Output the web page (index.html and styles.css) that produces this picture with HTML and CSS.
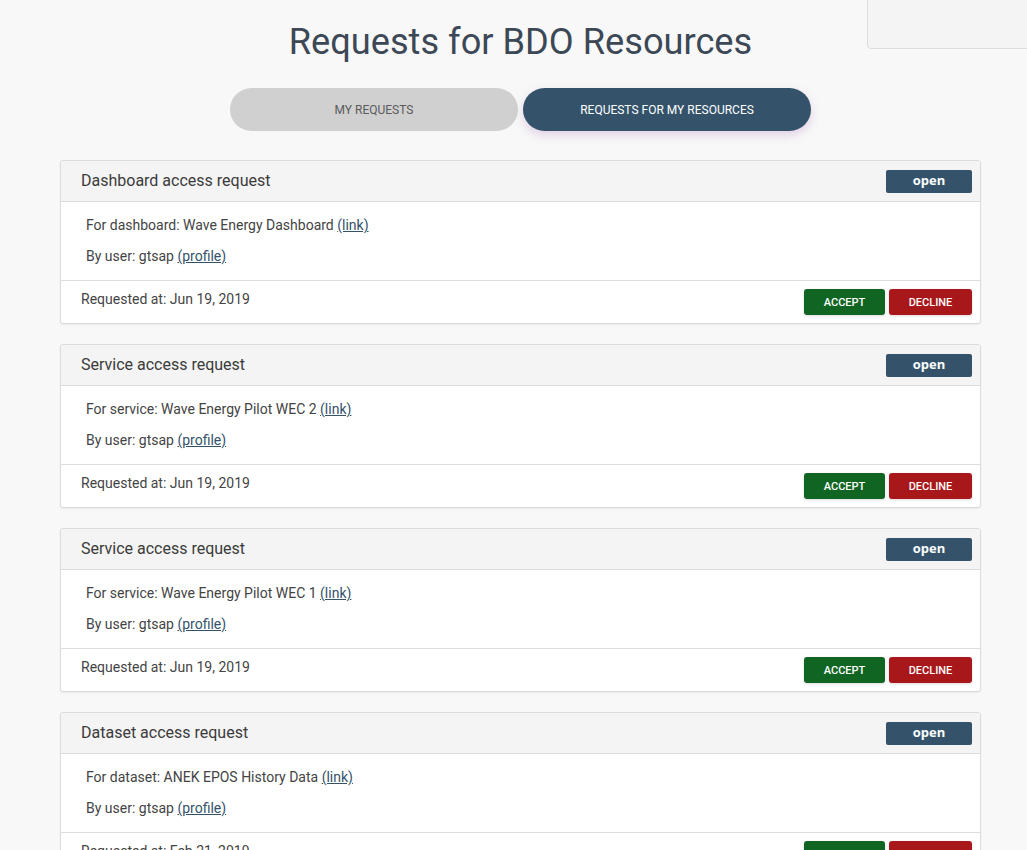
FILE: index.html
```html
<!DOCTYPE html>
<html lang="en">
<head>
<meta charset="utf-8">
<title>Requests for BDO Resources</title>
<link rel="stylesheet" href="styles.css">
</head>
<body>
<div class="corner-box"></div>
<main class="page">
  <h1 class="title">Requests for BDO Resources</h1>
  <div class="tabs">
    <button class="tab">MY REQUESTS</button>
    <button class="tab tab-active">REQUESTS FOR MY RESOURCES</button>
  </div>

  <section class="card">
    <div class="card-head">
      <span class="card-title">Dashboard access request</span>
      <span class="badge">open</span>
    </div>
    <div class="card-body">
      <p>For dashboard: Wave Energy Dashboard <a href="#">(link)</a></p>
      <p>By user: gtsap <a href="#">(profile)</a></p>
    </div>
    <div class="card-foot">
      <span class="date">Requested at: Jun 19, 2019</span>
      <div class="actions">
        <button class="btn btn-accept">ACCEPT</button>
        <button class="btn btn-decline">DECLINE</button>
      </div>
    </div>
  </section>

  <section class="card">
    <div class="card-head">
      <span class="card-title">Service access request</span>
      <span class="badge">open</span>
    </div>
    <div class="card-body">
      <p>For service: Wave Energy Pilot WEC 2 <a href="#">(link)</a></p>
      <p>By user: gtsap <a href="#">(profile)</a></p>
    </div>
    <div class="card-foot">
      <span class="date">Requested at: Jun 19, 2019</span>
      <div class="actions">
        <button class="btn btn-accept">ACCEPT</button>
        <button class="btn btn-decline">DECLINE</button>
      </div>
    </div>
  </section>

  <section class="card">
    <div class="card-head">
      <span class="card-title">Service access request</span>
      <span class="badge">open</span>
    </div>
    <div class="card-body">
      <p>For service: Wave Energy Pilot WEC 1 <a href="#">(link)</a></p>
      <p>By user: gtsap <a href="#">(profile)</a></p>
    </div>
    <div class="card-foot">
      <span class="date">Requested at: Jun 19, 2019</span>
      <div class="actions">
        <button class="btn btn-accept">ACCEPT</button>
        <button class="btn btn-decline">DECLINE</button>
      </div>
    </div>
  </section>

  <section class="card">
    <div class="card-head">
      <span class="card-title">Dataset access request</span>
      <span class="badge">open</span>
    </div>
    <div class="card-body">
      <p>For dataset: ANEK EPOS History Data <a href="#">(link)</a></p>
      <p>By user: gtsap <a href="#">(profile)</a></p>
    </div>
    <div class="card-foot">
      <span class="date">Requested at: Feb 21, 2019</span>
      <div class="actions">
        <button class="btn btn-accept">ACCEPT</button>
        <button class="btn btn-decline">DECLINE</button>
      </div>
    </div>
  </section>
</main>
</body>
</html>
```

FILE: styles.css
```css
html, body {
  margin: 0;
  padding: 0;
  background: #f8f8f8;
  font-family: Roboto, "Liberation Sans", sans-serif;
  color: #3b3b3b;
}

.corner-box {
  position: absolute;
  top: -4px;
  right: -4px;
  width: 162px;
  height: 51px;
  background: #f4f4f4;
  border: 1px solid #dcdcdc;
  border-radius: 4px;
}

.page {
  margin: 0 46px 0 60px;
  padding-top: 18px;
  padding-bottom: 40px;
}

.title {
  margin: 0;
  text-align: center;
  font-size: 36.2px;
  font-weight: 400;
  line-height: 48px;
  color: #3c4856;
}

.tabs {
  display: flex;
  justify-content: center;
  gap: 5px;
  margin-top: 22px;
  margin-bottom: 29px;
}

.tab {
  width: 288px;
  height: 43px;
  border: none;
  border-radius: 22px;
  background: #d0d0d0;
  color: #5b5b5b;
  font-family: Roboto, "Liberation Sans", sans-serif;
  font-size: 12px;
  font-weight: 400;
  cursor: pointer;
}

.tab-active {
  background: #34536b;
  color: #ffffff;
  box-shadow: 0 4px 10px rgba(150, 90, 170, 0.25);
}

.card {
  background: #ffffff;
  border: 1px solid #dcdcdc;
  border-radius: 3px;
  box-shadow: 0 1px 2px rgba(0, 0, 0, 0.06);
  margin-bottom: 20px;
  overflow: hidden;
}

.card-head {
  display: flex;
  justify-content: space-between;
  align-items: center;
  height: 40px;
  padding: 0 8px 0 20px;
  background: #f4f4f4;
  border-bottom: 1px solid #dcdcdc;
}

.card-title {
  font-size: 16px;
  line-height: 38px;
  color: #3b3b3b;
}

.badge {
  width: 86px;
  height: 23px;
  line-height: 21px;
  text-align: center;
  background: #34536b;
  color: #ffffff;
  border-radius: 2px;
  font-family: "Open Sans", sans-serif;
  font-weight: 700;
  font-size: 13px;
}

.card-body {
  padding: 8px 25px 8px;
  border-bottom: 1px solid #dcdcdc;
}

.card-body p {
  margin: 0;
  font-size: 14px;
  line-height: 31px;
  color: #444;
}

.card-body a {
  color: #34536b;
  text-decoration: underline;
}

.card-foot {
  display: flex;
  justify-content: space-between;
  align-items: flex-start;
  height: 42px;
  padding: 0 8px 0 20px;
  box-sizing: border-box;
}

.date {
  font-size: 14px;
  line-height: 36px;
  color: #444;
}

.actions {
  display: flex;
  gap: 4px;
  margin-top: 8px;
}

.btn {
  height: 26px;
  border: none;
  border-radius: 3px;
  color: #ffffff;
  font-family: Roboto, "Liberation Sans", sans-serif;
  font-size: 11px;
  font-weight: 500;
  box-shadow: 0 1px 3px rgba(0, 0, 0, 0.15);
  cursor: pointer;
}

.btn-accept {
  width: 81px;
  background: #116523;
}

.btn-decline {
  width: 83px;
  background: #a8181a;
}
```
